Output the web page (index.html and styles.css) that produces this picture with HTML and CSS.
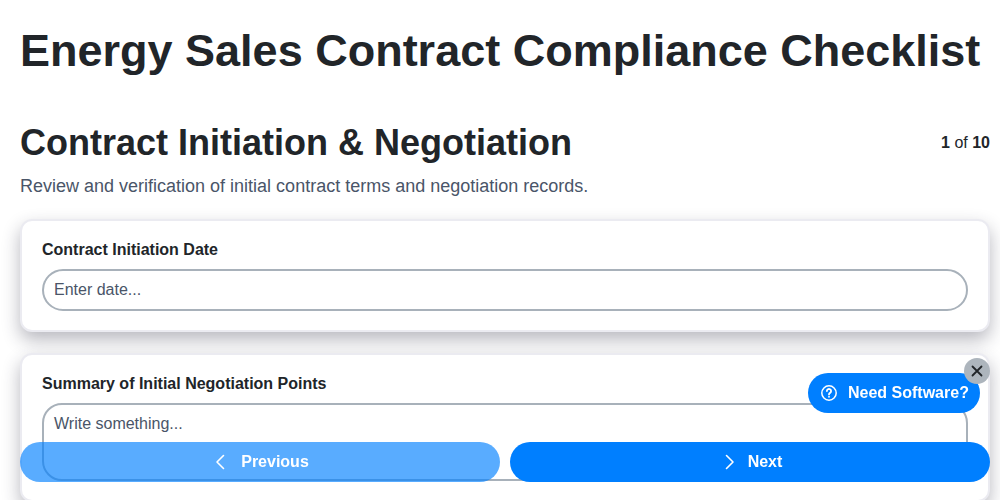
FILE: index.html
```html
<!DOCTYPE html>
<html lang="en">

<head>
    <meta charset="UTF-8">
    <meta name="viewport" content="width=device-width, initial-scale=1.0">
    <title>Energy Sales Contract Compliance Checklist</title>
    <link rel="stylesheet" href="styles.css">
</head>

<body>
    <div class="page">
        <h1>Energy Sales Contract Compliance Checklist</h1>

        <div class="section-header">
            <h2>Contract Initiation &amp; Negotiation</h2>
            <span class="step-count"><b>1</b> of <b>10</b></span>
        </div>
        <p class="section-desc">Review and verification of initial contract terms and negotiation records.</p>

        <div class="card">
            <label class="field-label">Contract Initiation Date</label>
            <input class="field-input" type="text" placeholder="Enter date...">
        </div>

        <div class="card">
            <label class="field-label">Summary of Initial Negotiation Points</label>
            <textarea class="field-area" placeholder="Write something..."></textarea>
        </div>
    </div>

    <!-- nav stays over the content -->
    <div class="nav-buttons">
        <button class="nav-btn prev">
            <svg width="20" height="20" viewBox="0 0 20 20" fill="none" stroke="currentColor" stroke-width="1.6" stroke-linecap="round" stroke-linejoin="round"><path d="M12.5 3.5 6 10l6.5 6.5"/></svg>
            Previous
        </button>
        <button class="nav-btn">
            <svg width="20" height="20" viewBox="0 0 20 20" fill="none" stroke="currentColor" stroke-width="1.6" stroke-linecap="round" stroke-linejoin="round"><path d="M8.5 3.5 15 10l-6.5 6.5"/></svg>
            Next
        </button>
    </div>

    <div class="promo">
        <svg width="18" height="18" viewBox="0 0 18 18" fill="none" stroke="currentColor" stroke-width="1.5" stroke-linecap="round"><circle cx="9" cy="9" r="7.2"/><path stroke-width="1.8" d="M6.9 7.1a2.1 2.1 0 1 1 3.2 1.8c-.7.4-1.1.8-1.1 1.5"/><path stroke-width="1.8" d="M9 12.7v.1"/></svg>
        Need Software?
        <span class="promo-close">
            <svg width="12" height="12" viewBox="0 0 12 12" fill="none" stroke="currentColor" stroke-width="1.8" stroke-linecap="round"><path d="M1.5 1.5l9 9M10.5 1.5l-9 9"/></svg>
        </span>
    </div>
</body>

</html>
```

FILE: styles.css
```css
* {
    box-sizing: border-box;
}

html,
body {
    height: 100%;
    overflow: hidden;
}

body {
    margin: 0;
    font-family: "Liberation Sans", Arial, sans-serif;
    color: #212529;
    background: #fff;
}

.page {
    padding: 20px 10px 0 20px;
}

h1 {
    margin: 0 0 41px;
    font-size: 45px;
    line-height: 62px;
    font-weight: 700;
    white-space: nowrap;
}

.section-header {
    display: flex;
    justify-content: space-between;
    align-items: flex-start;
}

h2 {
    margin: 0;
    font-size: 36px;
    line-height: 40px;
    font-weight: 700;
}

.step-count {
    font-size: 16px;
    line-height: 20px;
    margin-top: 10px;
}

.section-desc {
    margin: 12px 0 22px;
    font-size: 18px;
    line-height: 22px;
    color: #4a5568;
}

.card {
    margin-bottom: 21px;
    padding: 20px 20px 19px;
    background: #fff;
    border: 2px solid #ebebf1;
    border-radius: 12px;
    box-shadow: 0 8px 18px rgba(40, 40, 60, .33);
}

.field-label {
    display: block;
    margin-bottom: 10px;
    font-size: 16px;
    line-height: 18px;
    font-weight: 700;
}

.field-input,
.field-area {
    display: block;
    width: 100%;
    padding: 8px 10px;
    font-family: inherit;
    font-size: 16px;
    line-height: 22px;
    color: #4a5568;
    background: #fff;
    border: 2px solid #a8b1ba;
    outline: none;
}

.field-input {
    height: 42px;
    border-radius: 21px;
}

.field-area {
    height: 78px;
    border-radius: 20px;
    resize: none;
}

.field-input::placeholder,
.field-area::placeholder {
    color: #4a5568;
    opacity: 1;
}

.nav-buttons {
    position: fixed;
    left: 20px;
    right: 10px;
    bottom: 18px;
    display: flex;
    gap: 10px;
}

.nav-btn {
    flex: 1;
    height: 40px;
    display: flex;
    align-items: center;
    justify-content: center;
    gap: 10px;
    font-family: inherit;
    font-size: 16px;
    line-height: 18px;
    font-weight: 700;
    color: #fff;
    background: #007fff;
    border: 0;
    border-radius: 20px;
}

.nav-btn.prev {
    background: rgba(0, 127, 255, .65);
}

.promo {
    position: fixed;
    left: 808px;
    top: 373px;
    height: 40px;
    width: 172px;
    padding-left: 12px;
    display: flex;
    align-items: center;
    gap: 10px;
    font-size: 16px;
    font-weight: 700;
    color: #fff;
    background: #007fff;
    border-radius: 20px;
}

.promo-close {
    position: absolute;
    top: -15px;
    right: -10px;
    width: 26px;
    height: 26px;
    display: flex;
    align-items: center;
    justify-content: center;
    color: #212529;
    background: #adb5bd;
    border-radius: 50%;
}
```
